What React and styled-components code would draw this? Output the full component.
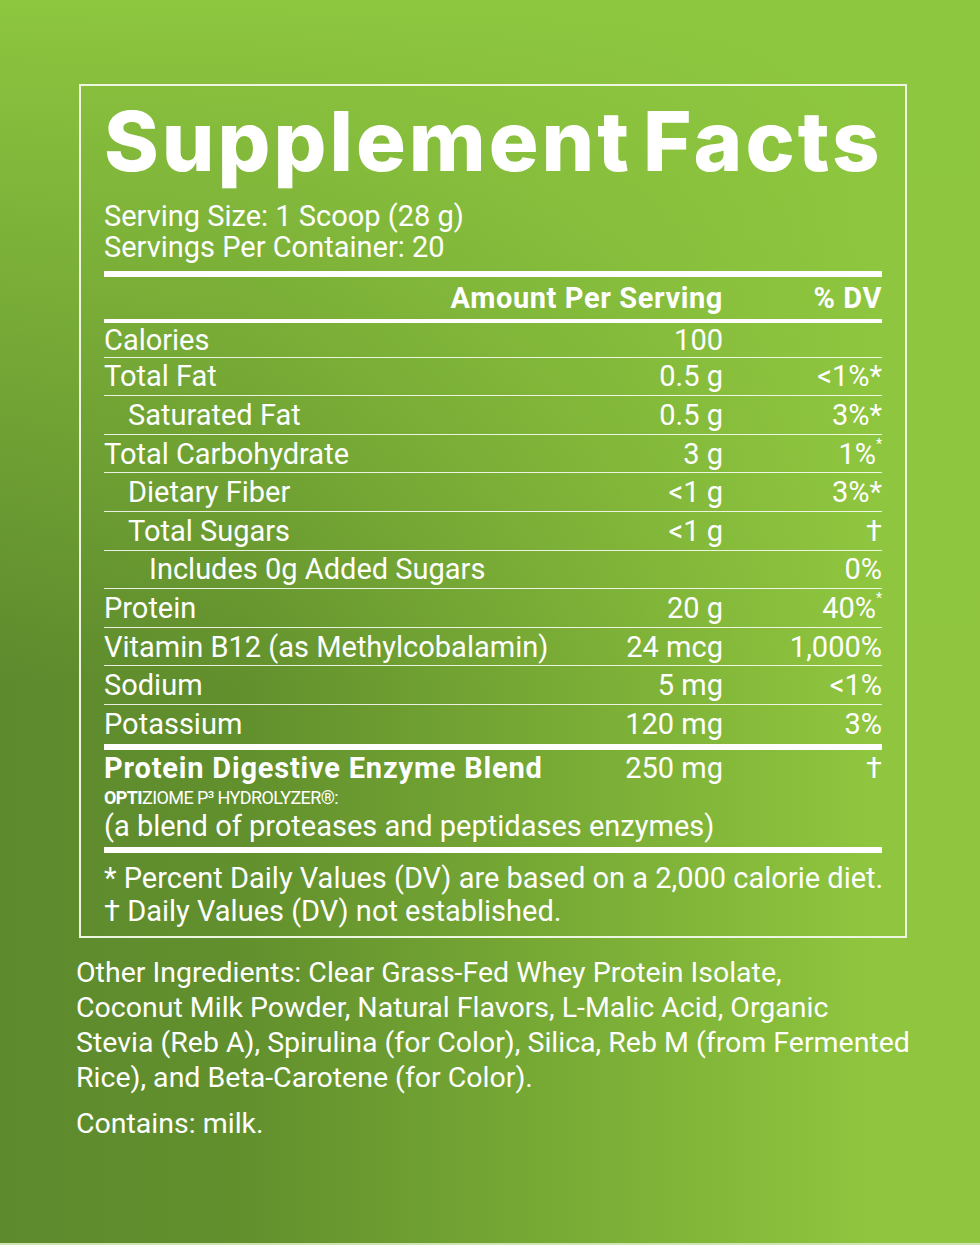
import React from 'react'
import styled, { createGlobalStyle } from 'styled-components'

const GlobalStyle = createGlobalStyle`
  html, body {
    margin: 0;
    padding: 0;
  }
  body {
    font-family: Roboto, 'Liberation Sans', sans-serif;
    color: #fff;
  }
`

const rows = [
  { name: 'Calories', amount: '100', dv: '', first: true },
  { name: 'Total Fat', amount: '0.5 g', dv: '<1%*' },
  { name: 'Saturated Fat', amount: '0.5 g', dv: '3%*', indent: 1 },
  { name: 'Total Carbohydrate', amount: '3 g', dv: '1%', sup: true },
  { name: 'Dietary Fiber', amount: '<1 g', dv: '3%*', indent: 1 },
  { name: 'Total Sugars', amount: '<1 g', dv: '†', indent: 1 },
  { name: 'Includes 0g Added Sugars', amount: '', dv: '0%', indent: 2 },
  { name: 'Protein', amount: '20 g', dv: '40%', sup: true },
  { name: 'Vitamin B12 (as Methylcobalamin)', amount: '24 mcg', dv: '1,000%' },
  { name: 'Sodium', amount: '5 mg', dv: '<1%' },
  { name: 'Potassium', amount: '120 mg', dv: '3%', last: true },
]

const App = () => {
  return (
    <Page>
      <GlobalStyle />
      <Panel>
        <Title>Supplement Facts</Title>
        <Serving>
          Serving Size: 1 Scoop (28 g)
          <br />
          Servings Per Container: 20
        </Serving>
        <ThickBar size={6} />
        <HeadRow>
          <HeadAmount>Amount Per Serving</HeadAmount>
          <Dv>% DV</Dv>
        </HeadRow>
        <ThickBar size={4} />
        {rows.map(r => (
          <Row key={r.name} first={r.first ? 1 : 0} last={r.last ? 1 : 0}>
            <Name indent={r.indent || 0}>{r.name}</Name>
            <Amount>{r.amount}</Amount>
            <Dv>
              {r.dv}
              {r.sup && <Sup>*</Sup>}
            </Dv>
          </Row>
        ))}
        <ThickBar size={6} />
        <Blend>
          <BlendName>Protein Digestive Enzyme Blend</BlendName>
          <Amount>250 mg</Amount>
          <Dv>†</Dv>
          <Trademark>
            <b>OPTI</b>ZIOME P³ HYDROLYZER®:
          </Trademark>
          <BlendNote>(a blend of proteases and peptidases enzymes)</BlendNote>
        </Blend>
        <ThickBar size={6} />
        <Footnotes>
          * Percent Daily Values (DV) are based on a 2,000 calorie diet.
          <br />† Daily Values (DV) not established.
        </Footnotes>
      </Panel>
      <Ingredients>
        Other Ingredients: Clear Grass-Fed Whey Protein Isolate,
        <br />
        Coconut Milk Powder, Natural Flavors, L-Malic Acid, Organic
        <br />
        Stevia (Reb A), Spirulina (for Color), Silica, Reb M (from Fermented
        <br />
        Rice), and Beta-Carotene (for Color).
      </Ingredients>
      <Contains>Contains: milk.</Contains>
    </Page>
  )
}

export default App

const Page = styled.div`
  box-sizing: border-box;
  width: 980px;
  height: 1245px;
  padding: 84px 0 0 0;
  overflow: hidden;
  border-bottom: 2px solid #cfe4b4;
  background: linear-gradient(180deg, rgba(141, 198, 63, 1) 0%, rgba(141, 198, 63, 0) 55%),
    linear-gradient(90deg, #5d8a2d 0%, #62902d 25%, #7aad36 60%, #90c63f 90%);
`

const Panel = styled.div`
  box-sizing: border-box;
  width: 828px;
  margin-left: 79px;
  padding: 13px 23px 8px 23px;
  border: 2px solid #eef6e2;
`

const Title = styled.h1`
  margin: 0;
  font-family: Inter, 'Liberation Sans', sans-serif;
  font-weight: 800;
  font-size: 83px;
  line-height: 84px;
  letter-spacing: 3px;
  word-spacing: -10px;
  white-space: nowrap;
`

const Serving = styled.div`
  margin-top: 18px;
  padding-bottom: 8px;
  font-size: 29px;
  line-height: 31px;
`

const ThickBar = styled.div`
  height: ${p => p.size}px;
  background: #fff;
`

const cols = `
  display: grid;
  grid-template-columns: minmax(0, 1fr) 180px 159px;
  align-items: center;
`

const HeadRow = styled.div`
  ${cols}
  height: 42px;
  font-weight: 700;
  font-size: 29px;
  letter-spacing: 0.6px;
`

const HeadAmount = styled.span`
  grid-column: 1 / 3;
  text-align: right;
`

const Row = styled.div`
  ${cols}
  box-sizing: border-box;
  height: ${p => (p.first ? 34.6 : 38.6)}px;
  font-size: 29px;
  border-bottom: ${p => (p.last ? 'none' : '1px solid rgba(255,255,255,0.85)')};
`

const Name = styled.span`
  padding-left: ${p => [0, 24, 45][p.indent]}px;
  white-space: nowrap;
`

const Amount = styled.span`
  text-align: right;
  white-space: nowrap;
`

const Dv = styled.span`
  text-align: right;
  white-space: nowrap;
`

const Sup = styled.sup`
  font-size: 14px;
  vertical-align: top;
  line-height: 1;
`

const Blend = styled.div`
  ${cols}
  align-items: start;
  padding: 3px 0 4px;
  font-size: 29px;
  line-height: 30px;
`

const BlendName = styled.span`
  font-weight: 700;
  letter-spacing: 0.8px;
  white-space: nowrap;
`

const Trademark = styled.div`
  grid-column: 1 / -1;
  margin-top: 4px;
  font-size: 18px;
  line-height: 22px;
  letter-spacing: -0.6px;
  b {
    font-weight: 700;
  }
`

const BlendNote = styled.div`
  grid-column: 1 / -1;
  line-height: 34px;
`

const Footnotes = styled.div`
  padding-top: 9px;
  font-size: 29px;
  line-height: 33px;
  white-space: nowrap;
`

const Ingredients = styled.p`
  margin: 17px 0 0 76px;
  font-size: 28.5px;
  line-height: 35px;
  white-space: nowrap;
`

const Contains = styled(Ingredients)`
  margin-top: 11px;
`
